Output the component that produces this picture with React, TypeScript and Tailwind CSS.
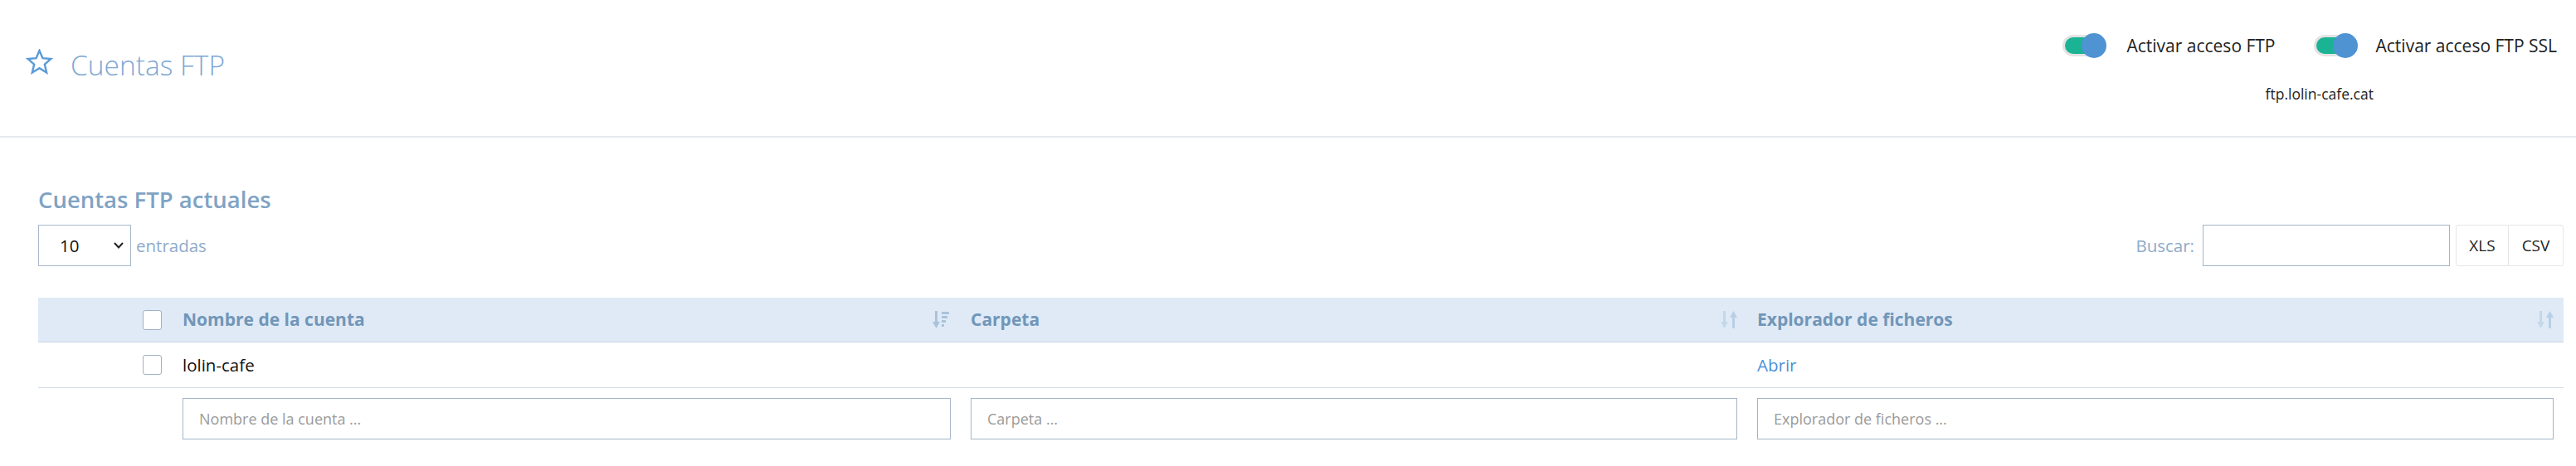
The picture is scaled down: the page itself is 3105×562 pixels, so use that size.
import React from "react";

function Star() {
  return (
    <svg width="33" height="31" viewBox="0 0 24 23" fill="none" stroke="#5b9bd8" strokeWidth="1.8" strokeLinejoin="miter">
      <polygon points="12,1.5 14.9,8.3 22.3,8.9 16.7,13.8 18.4,21.1 12,17.2 5.6,21.1 7.3,13.8 1.7,8.9 9.1,8.3" />
    </svg>
  );
}

function Toggle() {
  return (
    <div className="relative h-[30px] w-[53px] shrink-0">
      <div className="absolute left-0 top-[2px] h-[26px] w-[50px] rounded-full border-[3px] border-[#e3e3e3] bg-[#1ab394]" />
      <div className="absolute right-0 top-0 h-[30px] w-[30px] rounded-full bg-[#4f93d3]" />
    </div>
  );
}

function SortDesc() {
  return (
    <svg width="22" height="21" viewBox="0 0 22 21" className="shrink-0">
      <rect x="3" y="0" width="3" height="15" fill="#a9c3db" />
      <polygon points="0,13 9,13 4.5,21" fill="#a9c3db" />
      <rect x="11" y="1" width="9" height="3" fill="#a9c3db" />
      <rect x="11" y="6" width="7" height="3" fill="#a9c3db" />
      <rect x="11" y="11" width="5" height="3" fill="#a9c3db" />
      <rect x="11" y="16" width="3" height="3" fill="#a9c3db" />
    </svg>
  );
}

function SortBoth() {
  return (
    <svg width="20" height="21" viewBox="0 0 20 21" className="shrink-0">
      <rect x="3" y="0" width="3" height="15" fill="#c4d8ea" />
      <polygon points="0,13 9,13 4.5,21" fill="#c4d8ea" />
      <rect x="14" y="6" width="3" height="15" fill="#b8cfe5" />
      <polygon points="11,8 20,8 15.5,0" fill="#b8cfe5" />
    </svg>
  );
}

function Checkbox() {
  return <div className="h-[24px] w-[23px] rounded-[3px] border border-[#9fb1c4] bg-white" />;
}

export default function App() {
  return (
    <div className="min-h-[562px] w-full bg-white font-['Open_Sans',sans-serif] text-[#222]">
      {/* Top header */}
      <div className="flex h-[166px] justify-between border-b-2 border-[#e6eaef] pr-[23px]">
        <div className="flex items-start gap-[21px] pl-[31px] pt-[58px]">
          <div className="pt-[1px]">
            <Star />
          </div>
          <div className="text-[33.5px] font-light leading-[40px] text-[#7ca7d4]">Cuentas FTP</div>
        </div>
        <div className="flex flex-col pt-[40px]">
          <div className="flex h-[30px] items-center">
            <Toggle />
            <span className="ml-[24px] text-[21px] leading-[30px] text-[#222]">Activar acceso FTP</span>
            <div className="ml-[46px]">
              <Toggle />
            </div>
            <span className="ml-[22px] text-[21px] leading-[30px] text-[#222]">Activar acceso FTP SSL</span>
          </div>
          <div className="mt-[31px] self-center pl-[23px] text-[17.5px] leading-[24px] text-[#222]">ftp.lolin-cafe.cat</div>
        </div>
      </div>

      {/* Content */}
      <div className="pl-[46px] pr-[15px]">
        <div className="mt-[57px] text-[27.5px] font-semibold leading-[36px] text-[#7fa3c4]">Cuentas FTP actuales</div>

        <div className="mt-[12px] flex h-[50px] items-center justify-between">
          <div className="flex items-center">
            <div className="flex h-[50px] w-[112px] items-center justify-between border border-[#a7b8ca] pl-[25px] pr-[8px]">
              <span className="text-[20.5px] text-[#111]">10</span>
              <svg width="12" height="8" viewBox="0 0 12 8" fill="none" stroke="#222" strokeWidth="2">
                <polyline points="1,1 6,6.5 11,1" />
              </svg>
            </div>
            <span className="ml-[6px] text-[20.5px] text-[#8eabc9]">entradas</span>
          </div>
          <div className="flex items-center">
            <span className="text-[20.5px] text-[#8eabc9]">Buscar:</span>
            <div className="ml-[10px] h-[50px] w-[298px] border border-[#a3b5c8] bg-white" />
            <div className="ml-[7px] flex h-[50px] rounded-[3px] border border-[#e6e6e6]">
              <div className="flex w-[63px] items-center justify-center border-r border-[#e6e6e6] text-[19px] text-[#222]">XLS</div>
              <div className="flex w-[65px] items-center justify-center text-[19px] text-[#222]">CSV</div>
            </div>
          </div>
        </div>

        {/* Table */}
        <div className="mt-[38px]">
          <div className="grid h-[54px] grid-cols-[162px_950px_948px_984px] border-b border-[#c9d6e3] bg-[#dfeaf6] text-[21px] font-bold text-[#7196b8]">
            <div className="flex items-center justify-end pr-[13px]">
              <Checkbox />
            </div>
            <div className="flex items-center justify-between px-3">
              <span>Nombre de la cuenta</span>
              <SortDesc />
            </div>
            <div className="flex items-center justify-between px-3">
              <span>Carpeta</span>
              <SortBoth />
            </div>
            <div className="flex items-center justify-between px-3">
              <span>Explorador de ficheros</span>
              <SortBoth />
            </div>
          </div>
          <div className="grid h-[55px] grid-cols-[162px_950px_948px_984px] border-b border-[#d3dce5] text-[20.5px]">
            <div className="flex items-center justify-end pr-[13px]">
              <Checkbox />
            </div>
            <div className="flex items-center px-3 text-[#111]">lolin-cafe</div>
            <div className="flex items-center px-3" />
            <div className="flex items-center px-3 text-[#4a90d9]">Abrir</div>
          </div>
          <div className="grid grid-cols-[162px_950px_948px_984px] pt-[12px]">
            <div />
            <div className="px-3">
              <div className="flex h-[50px] items-center border border-[#a3b5c8] pl-[19px] text-[18px] text-[#9a9a9a]">Nombre de la cuenta ...</div>
            </div>
            <div className="px-3">
              <div className="flex h-[50px] items-center border border-[#a3b5c8] pl-[19px] text-[18px] text-[#9a9a9a]">Carpeta ...</div>
            </div>
            <div className="px-3">
              <div className="flex h-[50px] items-center border border-[#a3b5c8] pl-[19px] text-[18px] text-[#9a9a9a]">Explorador de ficheros ...</div>
            </div>
          </div>
        </div>
      </div>
    </div>
  );
}
